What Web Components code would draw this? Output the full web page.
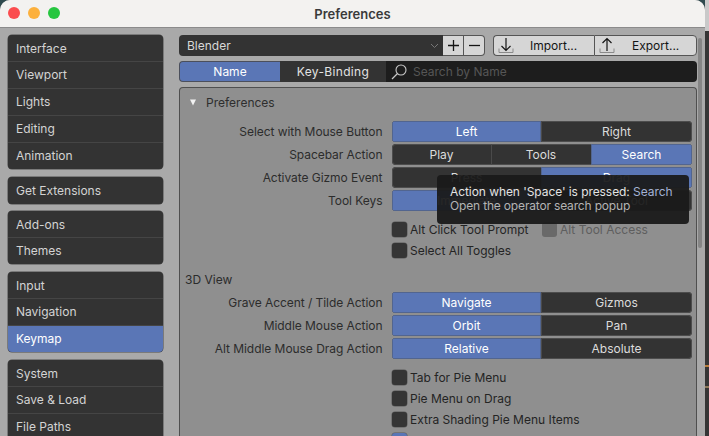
<!DOCTYPE html>
<html>
<head>
<meta charset="utf-8">
<title>Preferences</title>
<style>
  html, body { margin: 0; height: 100%; overflow: hidden; background: #3a3a3a; }
  body { font: 12px Inter, "Liberation Sans", sans-serif; }
</style>
</head>
<body>

<app-desktop>
  <app-window title="Preferences">
    <side-nav slot="side">
      <nav-group>
        <nav-item>Interface</nav-item>
        <nav-item>Viewport</nav-item>
        <nav-item>Lights</nav-item>
        <nav-item>Editing</nav-item>
        <nav-item>Animation</nav-item>
      </nav-group>
      <nav-group class="single"><nav-item>Get Extensions</nav-item></nav-group>
      <nav-group>
        <nav-item>Add-ons</nav-item>
        <nav-item>Themes</nav-item>
      </nav-group>
      <nav-group>
        <nav-item>Input</nav-item>
        <nav-item>Navigation</nav-item>
        <nav-item active>Keymap</nav-item>
      </nav-group>
      <nav-group>
        <nav-item>System</nav-item>
        <nav-item>Save &amp; Load</nav-item>
        <nav-item>File Paths</nav-item>
      </nav-group>
    </side-nav>

    <preset-bar></preset-bar>
    <search-bar></search-bar>

    <pref-panel heading="Preferences">
      <pref-row label="Select with Mouse Button">
        <seg-button active>Left</seg-button>
        <seg-button>Right</seg-button>
      </pref-row>
      <pref-row label="Spacebar Action">
        <seg-button>Play</seg-button>
        <seg-button>Tools</seg-button>
        <seg-button active>Search</seg-button>
      </pref-row>
      <pref-row label="Activate Gizmo Event">
        <seg-button>Press</seg-button>
        <seg-button active>Drag</seg-button>
      </pref-row>
      <pref-row label="Tool Keys">
        <seg-button active>Immediate</seg-button>
        <seg-button>Active Tool</seg-button>
      </pref-row>

      <check-row class="first">
        <check-box>Alt Click Tool Prompt</check-box>
        <check-box disabled>Alt Tool Access</check-box>
      </check-row>
      <check-row><check-box>Select All Toggles</check-box></check-row>

      <sub-heading>3D View</sub-heading>

      <pref-row label="Grave Accent / Tilde Action">
        <seg-button active>Navigate</seg-button>
        <seg-button>Gizmos</seg-button>
      </pref-row>
      <pref-row label="Middle Mouse Action">
        <seg-button active>Orbit</seg-button>
        <seg-button>Pan</seg-button>
      </pref-row>
      <pref-row label="Alt Middle Mouse Drag Action">
        <seg-button active>Relative</seg-button>
        <seg-button>Absolute</seg-button>
      </pref-row>

      <check-row class="first"><check-box>Tab for Pie Menu</check-box></check-row>
      <check-row><check-box>Pie Menu on Drag</check-box></check-row>
      <check-row><check-box>Extra Shading Pie Menu Items</check-box></check-row>
      <check-row><check-box checked></check-box></check-row>
    </pref-panel>

    <hover-tip>
      <div style="letter-spacing:-.07px">Action when 'Space' is pressed: <span style="color:#a3b2d6">Search</span></div>
      <div style="color:#b4b4b4;letter-spacing:-.17px">Open the operator search popup</div>
    </hover-tip>
  </app-window>
</app-desktop>

<script>
function shadow(el, html) {
  el.attachShadow({ mode: "open" }).innerHTML = html;
}

class AppDesktop extends HTMLElement {
  connectedCallback() {
    shadow(this, `
      <style>
        :host { display: flex; width: 709px; height: 436px; overflow: hidden;
                background: #2f4a4e; }
        .strip { flex: 1; background:
          linear-gradient(#c9c9c9 0 31px, transparent 31px),
          linear-gradient(transparent 365px, #b97f3e 365px 367px, transparent 367px 386px, #8f7a5c 386px 388px, transparent 388px),
          #353535; }
      </style>
      <slot></slot>
      <div class="strip"></div>`);
  }
}

class AppWindow extends HTMLElement {
  connectedCallback() {
    shadow(this, `
      <style>
        :host { display: flex; flex-direction: column; position: relative; width: 705px; height: 436px;
                border-radius: 10px 10px 0 0; overflow: hidden; background: #a9a9a9; }
        .title { flex: none; height: 27px; display: flex; align-items: center; justify-content: center;
                 position: relative; background: #f3f2f0; border-bottom: 1px solid #8b8b8b;
                 color: #3a3a3a; font-weight: 600; font-size: 13px; }
        .lights { position: absolute; left: 8px; top: 7px; display: flex; gap: 8px; }
        .lights i { width: 12px; height: 12px; border-radius: 50%; }
        .body { flex: 1; min-height: 0; display: flex; gap: 16px; padding: 7px 8px 0; }
        .main { width: 518px; display: flex; flex-direction: column; gap: 5px; min-height: 0; }
        .scroll { position: absolute; left: 698px; top: 38px; width: 4px; height: 210px;
                  border-radius: 2px; background: #858585; }
      </style>
      <div class="title">
        <div class="lights">
          <i style="background:#fb4c4e"></i><i style="background:#fcb03c"></i><i style="background:#26c63f"></i>
        </div>
        ${this.getAttribute("title")}
      </div>
      <div class="body">
        <slot name="side"></slot>
        <div class="main"><slot></slot></div>
      </div>
      <div class="scroll"></div>`);
  }
}

class SideNav extends HTMLElement {
  connectedCallback() {
    shadow(this, `
      <style>:host { display: flex; flex-direction: column; gap: 8px; width: 155px; flex: none; }</style>
      <slot></slot>`);
  }
}

class NavGroup extends HTMLElement {
  connectedCallback() {
    shadow(this, `
      <style>
        :host { display: flex; flex: none; flex-direction: column; background: #333; border-radius: 4px;
                overflow: hidden; box-shadow: 0 0 0 .5px #4c4c4c; }
        :host(.single) { padding-bottom: 1px; margin-bottom: -1px; }
      </style>
      <slot></slot>`);
  }
}

class NavItem extends HTMLElement {
  connectedCallback() {
    shadow(this, `
      <style>
        :host { display: flex; flex: none; align-items: center; height: 26px; padding-left: 8px; color: #d4d4d4;
                font-size: 12px; }
        :host(:not(:first-child)) { height: 25px; padding-bottom: 1px; }
        :host(:not(:last-child)) { border-bottom: 1px solid #454545; }
        :host([active]) { background: #5a76b6; color: #fff; }
      </style>
      <slot></slot>`);
  }
}

class PresetBar extends HTMLElement {
  connectedCallback() {
    shadow(this, `
      <style>
        :host { display: flex; height: 21px; flex: none; }
        .drop { width: 264px; box-sizing: border-box; display: flex; align-items: center; justify-content: space-between;
                padding: 0 4px 0 8px; background: #333; color: #d8d8d8; border-radius: 4px 0 0 4px; }
        .btn { display: flex; align-items: center; justify-content: center; box-sizing: border-box;
               background: #d6d6d6; color: #141414; border: 1px solid #555; border-left: 0; height: 21px; }
        .sq { width: 21px; }
        .sq.end { border-radius: 0 4px 4px 0; }
        .wide { justify-content: flex-start; padding-left: 4px; }
        .imp { margin-left: 8px; width: 101px; gap: 16px; border-left: 1px solid #555; border-radius: 4px 0 0 4px; border-right: 0; }
        .exp { width: 103px; gap: 17px; border-left: 1px solid #555; border-radius: 0 4px 4px 0; }
        svg { display: block; fill: none; stroke: currentColor; }
      </style>
      <div class="drop">Blender
        <svg width="9" height="6" viewBox="0 0 9 6" style="stroke:#777"><path d="M1 1l3.5 3.5L8 1"/></svg>
      </div>
      <div class="btn sq"><svg width="11" height="11" viewBox="0 0 11 11" stroke-width="1.3"><path d="M5.5 0v11M0 5.5h11"/></svg></div>
      <div class="btn sq end"><svg width="11" height="11" viewBox="0 0 11 11" stroke-width="1.3"><path d="M0 5.5h11"/></svg></div>
      <div class="btn wide imp">
        <svg width="16" height="17" viewBox="0 0 16 17"><path d="M8 1v12.500M3.500 9L8 13.500 12.500 9" stroke-width="1.200"/><path d="M1 11.500v4h14v-4" stroke="#8a8a8a"/></svg>
        <span>Import...</span>
      </div>
      <div class="btn wide exp">
        <svg width="16" height="17" viewBox="0 0 16 17"><path d="M8 14V1.500M3.500 6L8 1.500 12.500 6" stroke-width="1.200"/><path d="M1 11.500v4h14v-4" stroke="#8a8a8a"/></svg>
        <span>Export...</span>
      </div>`);
  }
}

class SearchBar extends HTMLElement {
  connectedCallback() {
    shadow(this, `
      <style>
        :host { display: flex; height: 21px; flex: none; }
        .tab { display: flex; align-items: center; justify-content: center; box-sizing: border-box; color: #e2e2e2; background: #333; }
        .name { width: 101px; background: #5a76b6; color: #fff; border: 1px solid #4b4f5c; border-right: 0; border-radius: 4px 0 0 4px; }
        .key { width: 106px; letter-spacing: .35px; }
        .find { flex: 1; display: flex; align-items: center; gap: 6px; padding-left: 5px; background: #1d1d1d;
                color: #565656; border-radius: 0 4px 4px 0; }
        svg { display: block; fill: none; stroke: #c8c8c8; }
      </style>
      <div class="tab name">Name</div>
      <div class="tab key">Key-Binding</div>
      <div class="find">
        <svg width="16" height="17" viewBox="0 0 16 17"><circle cx="10" cy="7" r="5" stroke-width="1.100"/><path d="M6.500 10.500L1 16" stroke-width="1.200"/></svg>
        Search by Name
      </div>`);
  }
}

class PrefPanel extends HTMLElement {
  connectedCallback() {
    shadow(this, `
      <style>
        :host { display: block; flex: none; height: 400px; background: #8f8f8f; border: 1px solid #4f4f4f;
                border-bottom: 0; border-radius: 4px 4px 0 0; box-sizing: border-box; }
        .head { height: 33px; display: flex; align-items: center; gap: 9px; padding: 0 0 4px 9px; box-sizing: border-box;
                color: #2e2e2e; }
        .head svg { display: block; }
      </style>
      <div class="head">
        <svg width="8" height="7" viewBox="0 0 8 7"><path d="M1 .500h6L4 6.500z" fill="#f2f2f2"/></svg>
        ${this.getAttribute("heading")}
      </div>
      <slot></slot>`);
  }
}

class PrefRow extends HTMLElement {
  connectedCallback() {
    shadow(this, `
      <style>
        :host { display: flex; align-items: center; height: 21px; margin-bottom: 2px; color: #2c2c2c; }
        .label { width: 202.500px; margin-right: .5px; text-align: right; white-space: nowrap; letter-spacing: -.05px; }
        .ctl { margin-left: 9px; width: 300px; height: 21px; display: flex; box-sizing: border-box;
               border-radius: 4px; overflow: hidden; background: #333; box-shadow: inset 0 0 0 1px #4d4d4d; }
      </style>
      <div class="label">${this.getAttribute("label")}</div>
      <div class="ctl"><slot></slot></div>`);
  }
}

class SegButton extends HTMLElement {
  connectedCallback() {
    shadow(this, `
      <style>
        :host { flex: 1 1 0; display: flex; align-items: center; justify-content: center; color: #dcdcdc; }
        :host(:first-child:nth-last-child(2)) { flex: 0 0 149px; }
        :host(:first-child:nth-last-child(3)) { flex: 0 0 99px; }
        :host(:nth-child(2):nth-last-child(2)) { flex: 0 0 100px; }
        :host(:not(:first-child)) { box-shadow: inset 1px 0 0 #4a4a4a; }
        :host([active]) { background: #5a76b6; color: #fff; box-shadow: inset 0 0 0 1px #52658f; }
      </style>
      <slot></slot>`);
  }
}

class CheckRow extends HTMLElement {
  connectedCallback() {
    shadow(this, `
      <style>
        :host { display: flex; height: 21px; padding-left: 212px; gap: 0; }
        :host(.first) { margin-top: 8px; }
        ::slotted(check-box) { width: 150px; }
      </style>
      <slot></slot>`);
  }
}

class CheckBox extends HTMLElement {
  connectedCallback() {
    shadow(this, `
      <style>
        :host { display: flex; align-items: center; gap: 3px; color: #242424; white-space: nowrap; }
        i { width: 15px; height: 15px; border-radius: 3px; background: #353535; flex: none;
            box-shadow: 0 0 0 .5px #5a5a5a; }
        :host([disabled]) { color: #5e5e5e; }
        :host([disabled]) i { background: #696969; box-shadow: none; }
        :host([checked]) i { background: #5a76b6; }
      </style>
      <i></i><slot></slot>`);
  }
}

class SubHeading extends HTMLElement {
  connectedCallback() {
    shadow(this, `
      <style>
        :host { display: flex; align-items: center; height: 21px; margin: 8px 0 2px; padding-left: 5px; color: #2c2c2c; }
      </style>
      <slot></slot>`);
  }
}

class HoverTip extends HTMLElement {
  connectedCallback() {
    shadow(this, `
      <style>
        :host { position: absolute; left: 437px; top: 175px; width: 252px; height: 49px; box-sizing: border-box;
                padding: 10px 13px; border-radius: 4px; background: rgba(26,26,26,.94); color: #e4e4e4;
                line-height: 14px; white-space: nowrap; }
      </style>
      <slot></slot>`);
  }
}

customElements.define("app-desktop", AppDesktop);
customElements.define("app-window", AppWindow);
customElements.define("side-nav", SideNav);
customElements.define("nav-group", NavGroup);
customElements.define("nav-item", NavItem);
customElements.define("preset-bar", PresetBar);
customElements.define("search-bar", SearchBar);
customElements.define("pref-panel", PrefPanel);
customElements.define("pref-row", PrefRow);
customElements.define("seg-button", SegButton);
customElements.define("check-row", CheckRow);
customElements.define("check-box", CheckBox);
customElements.define("sub-heading", SubHeading);
customElements.define("hover-tip", HoverTip);
</script>
</body>
</html>
